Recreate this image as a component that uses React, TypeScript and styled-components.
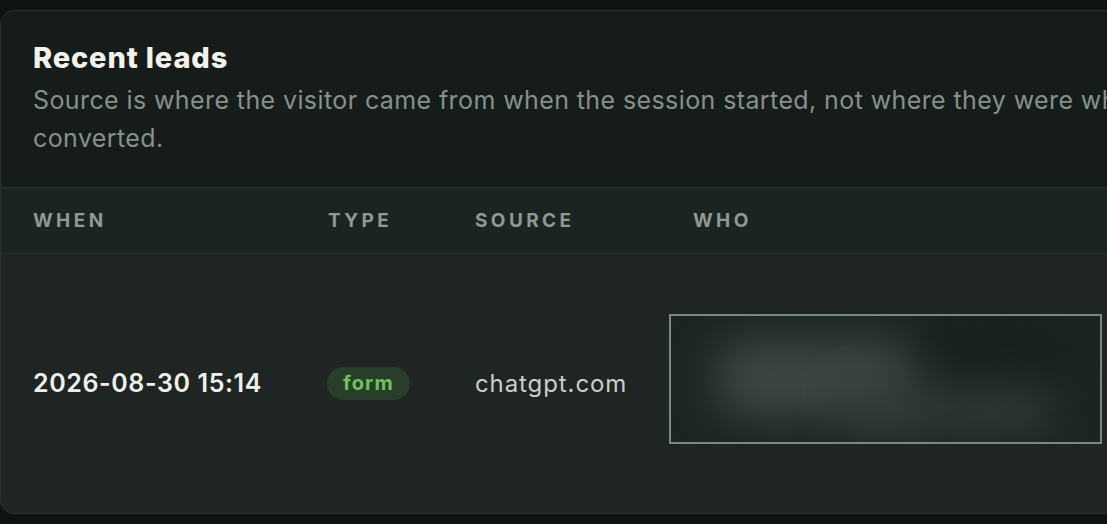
import styled, { createGlobalStyle } from "styled-components";

const GlobalStyle = createGlobalStyle`
  html, body {
    margin: 0;
    padding: 0;
    background: #0c1311;
    overflow: hidden;
    font-family: Inter, "Noto Sans", sans-serif;
  }
`;

const Page = styled.div`
  width: 1107px;
  height: 524px;
  padding-top: 10px;
  box-sizing: border-box;
  overflow: hidden;
`;

const Card = styled.section`
  width: 1260px;
  border: 1px solid #2a3330;
  border-radius: 14px;
  overflow: hidden;
  background: #1e2522;
`;

const CardHeader = styled.header`
  background: #151c1a;
  padding: 28px 32px 30px 32px;
`;

const Title = styled.h2`
  margin: 0;
  font-size: 29px;
  line-height: 38px;
  font-weight: 800;
  letter-spacing: 0.85px;
  color: #f2f1ea;
`;

const Subtitle = styled.p`
  margin: 4px 0 0;
  width: 1180px;
  font-size: 25px;
  line-height: 38px;
  letter-spacing: 0.4px;
  color: #85918a;
`;

const Table = styled.div`
  display: grid;
  grid-template-columns: 295px 147px 218px 1fr;
`;

const HeadCell = styled.div`
  background: #1c2421;
  border-top: 1px solid #2a3330;
  border-bottom: 1px solid #2a3330;
  height: 65px;
  display: flex;
  align-items: center;
  padding-left: 32px;
  font-size: 19px;
  font-weight: 700;
  letter-spacing: 3.4px;
  text-transform: uppercase;
  color: #8d9a93;
`;

const Cell = styled.div<{ $shift?: number }>`
  display: flex;
  align-items: center;
  padding: ${(p) => 60 + (p.$shift ?? 0)}px 0 69px 32px;
`;

const When = styled.span`
  font-size: 25px;
  font-weight: 600;
  letter-spacing: 0.6px;
  color: #f0f0ea;
`;

const Badge = styled.span`
  margin-left: -1px;
  display: inline-flex;
  align-items: center;
  height: 33px;
  padding: 0 16px;
  border-radius: 17px;
  background: #293d2b;
  color: #6fc25b;
  font-size: 20px;
  font-weight: 700;
  letter-spacing: 1.1px;
`;

const Source = styled.span`
  font-size: 24px;
  letter-spacing: 0.9px;
  color: #c8d0cb;
`;

const Redacted = styled.div`
  margin-left: -24px;
  width: 429px;
  height: 126px;
  border: 2px solid #7b8782;
  position: relative;
  overflow: hidden;
  background: #1c2522;
`;

const Blob = styled.div<{ $x: number; $y: number; $w: number; $h: number; $c: string }>`
  position: absolute;
  left: ${(p) => p.$x}px;
  top: ${(p) => p.$y}px;
  width: ${(p) => p.$w}px;
  height: ${(p) => p.$h}px;
  background: ${(p) => p.$c};
  border-radius: 30px;
  filter: blur(22px);
`;

export default function App() {
  return (
    <Page>
      <GlobalStyle />
      <Card>
        <CardHeader>
          <Title>Recent leads</Title>
          <Subtitle>
            Source is where the visitor came from when the session started, not where they were when they
            converted.
          </Subtitle>
        </CardHeader>
        <Table>
          <HeadCell>When</HeadCell>
          <HeadCell>Type</HeadCell>
          <HeadCell>Source</HeadCell>
          <HeadCell>Who</HeadCell>
          <Cell $shift={8}>
            <When>2026-08-30 15:14</When>
          </Cell>
          <Cell $shift={8}>
            <Badge>form</Badge>
          </Cell>
          <Cell $shift={8}>
            <Source>chatgpt.com</Source>
          </Cell>
          <Cell>
            <Redacted>
              <Blob $x={45} $y={25} $w={200} $h={75} $c="#3d4843" />
              <Blob $x={170} $y={70} $w={210} $h={45} $c="#323c37" />
              <Blob $x={260} $y={5} $w={140} $h={50} $c="#17211e" />
            </Redacted>
          </Cell>
        </Table>
      </Card>
    </Page>
  );
}
